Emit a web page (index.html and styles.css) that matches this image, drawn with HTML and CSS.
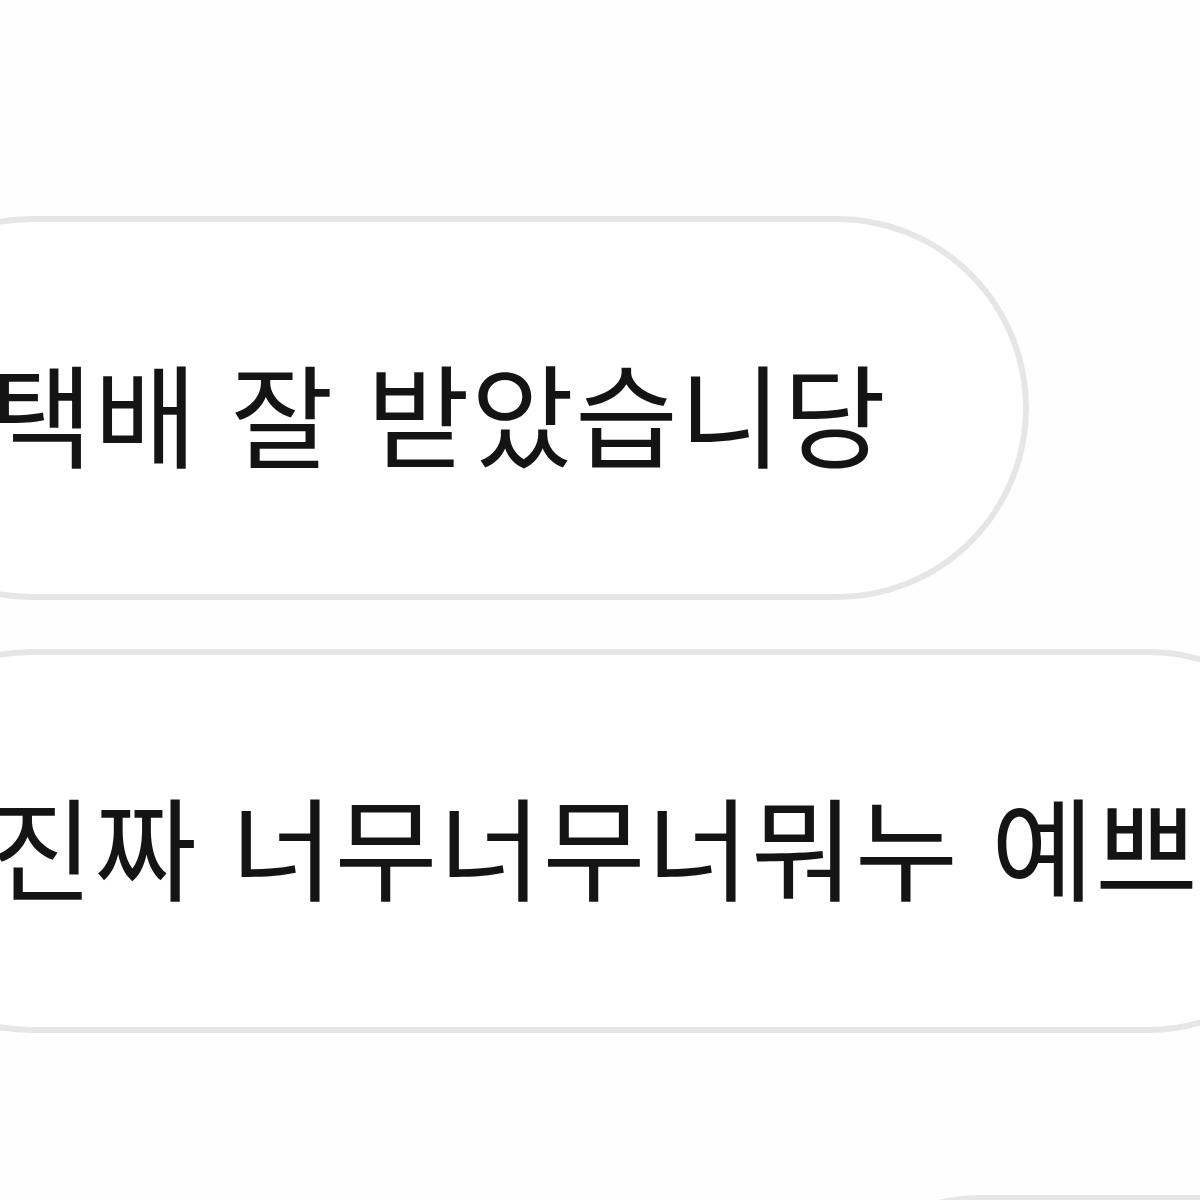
FILE: index.html
```html
<!DOCTYPE html>
<html lang="ko">
<head>
    <meta charset="UTF-8">
    <meta name="viewport" content="width=device-width, initial-scale=1.0">
    <title>채팅</title>
    <link rel="stylesheet" href="styles.css">
</head>
<body>

    <div class="chat">
        <!-- 받은 메시지 -->
        <div class="bubble bubble-first">택배 잘 받았습니당</div>
        <div class="bubble bubble-wide">진짜 너무너무너뭐누 예쁘</div>

        <!-- 다음 메시지 (잘림) -->
        <div class="bubble bubble-next"></div>
    </div>

</body>
</html>
```

FILE: styles.css
```css
body {
    margin: 0;
    padding: 0;
    background-color: #fefefe;
    font-family: "Noto Sans CJK KR", "Noto Sans", sans-serif;
    color: #141414;
    overflow: hidden;
}

.chat {
    width: 1200px;
    height: 1200px;
    overflow: hidden;
    padding-top: 216px;
    box-sizing: border-box;
    display: flex;
    flex-direction: column;
    align-items: flex-start;
}

.bubble {
    box-sizing: border-box;
    flex-shrink: 0;
    height: 384px;
    margin-left: -160px;
    padding-left: 144px;
    padding-top: 6px;
    border: 6px solid #e6e6e6;
    border-radius: 192px;
    background-color: #fff;
    display: flex;
    align-items: center;
    font-size: 112px;
    font-weight: 400;
    letter-spacing: 1px;
    line-height: 1;
    white-space: nowrap;
}

.bubble-first {
    width: 1189px;
}

.bubble-wide {
    width: 1500px;
    margin-top: 49px;
}

.bubble-next {
    width: 600px;
    margin-top: 162px;
    margin-left: 790px;
    padding-left: 0;
}
```
